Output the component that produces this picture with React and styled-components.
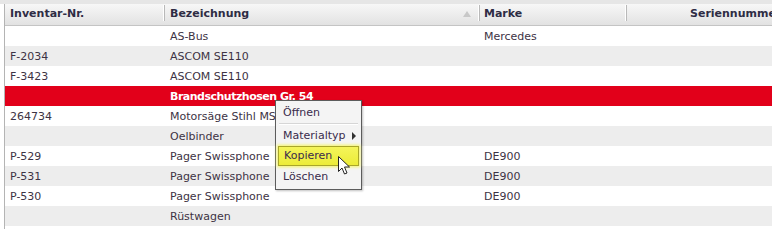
import React from 'react'
import styled, { createGlobalStyle } from 'styled-components'

const GlobalStyle = createGlobalStyle`
    html, body {
        margin: 0;
        padding: 0;
        background: #fff;
        overflow: hidden;
    }
    body {
        font-family: "DejaVu Sans", Verdana, sans-serif;
        font-size: 11px;
    }
`

const COLS = '160px 315px 147px 1fr'

const Frame = styled.div`
    position: relative;
    width: 772px;
    height: 229px;
    overflow: hidden;
    padding-top: 4px;
    background: #fff;
    box-sizing: border-box;
    &::before {
        content: '';
        position: absolute;
        left: 0;
        right: 0;
        top: 0;
        height: 4px;
        background: #e6e6e6;
    }
`

const Grid = styled.div`
    margin-left: 4px;
    border-left: 1px solid #b4b4b4;
    height: 100%;
`

const HeaderRow = styled.div`
    display: grid;
    grid-template-columns: ${COLS};
    height: 21px;
    background: linear-gradient(#f7f7f7, #e2e2e2);
    border-bottom: 1px solid #c4c4c4;
`

const HeadCell = styled.div`
    display: flex;
    align-items: center;
    justify-content: space-between;
    padding-left: ${p => p.$pad || 5}px;
    font-weight: bold;
    color: #2e2c44;
    white-space: nowrap;
    border-right: ${p => (p.$last ? 'none' : '1px solid #b9b9b9')};
    box-shadow: ${p => (p.$last ? 'none' : 'inset -1px 0 0 #fff')};
    margin: 1px 0 4px;
    overflow: hidden;
`

const SortArrow = styled.span`
    width: 0;
    height: 0;
    margin-right: 8px;
    margin-top: 2px;
    border-left: 4px solid transparent;
    border-right: 4px solid transparent;
    border-bottom: 6px solid #c8c8c8;
`

const Row = styled.div`
    display: grid;
    grid-template-columns: ${COLS};
    height: 20px;
    align-items: center;
    background: ${p => (p.$selected ? '#e2001a' : p.$odd ? '#ededed' : '#fff')};
    color: ${p => (p.$selected ? '#fff' : '#3d3344')};
    font-weight: ${p => (p.$selected ? 'bold' : 'normal')};
    letter-spacing: ${p => (p.$selected ? '-0.5px' : 'normal')};
`

const Cell = styled.div`
    padding-left: ${p => p.$pad || 5}px;
    white-space: nowrap;
    overflow: hidden;
`

const Menu = styled.div`
    position: absolute;
    left: 275px;
    top: 100px;
    width: 85px;
    padding: 2px 0;
    background: #f4f4f4;
    border: 1px solid #5c5c5c;
    box-shadow: 1px 1px 2px rgba(0, 0, 0, 0.25);
    color: #3a2c4c;
`

const MenuItem = styled.div`
    position: relative;
    height: ${p => (p.$active ? 18 : 20)}px;
    line-height: ${p => (p.$active ? 18 : 20)}px;
    margin: ${p => (p.$active ? '0 2px 1px' : '0')};
    padding-left: ${p => (p.$active ? 5 : 7)}px;
    background: ${p => (p.$active ? 'linear-gradient(#f4f45a, #ecec38)' : 'transparent')};
    border: ${p => (p.$active ? '1px solid #a9a62a' : 'none')};
    box-shadow: ${p => (p.$active ? '0 0 3px 1px #f5f560' : 'none')};
`

const SubArrow = styled.span`
    position: absolute;
    right: 5px;
    top: 6px;
    width: 0;
    height: 0;
    border-top: 4px solid transparent;
    border-bottom: 4px solid transparent;
    border-left: 4px solid #333;
`

const Separator = styled.div`
    height: 1px;
    margin: 0 3px 1px;
    background: #d6d6d6;
    border-bottom: 1px solid #fff;
`

const Pointer = styled.svg`
    position: absolute;
    left: 338px;
    top: 156px;
`

const rows = [
    ['', 'AS-Bus', 'Mercedes'],
    ['F-2034', 'ASCOM SE110', ''],
    ['F-3423', 'ASCOM SE110', ''],
    ['', 'Brandschutzhosen Gr. 54', '', true],
    ['264734', 'Motorsäge Stihl MS 260', ''],
    ['', 'Oelbinder', ''],
    ['P-529', 'Pager Swissphone', 'DE900'],
    ['P-531', 'Pager Swissphone', 'DE900'],
    ['P-530', 'Pager Swissphone', 'DE900'],
    ['', 'Rüstwagen', ''],
]

export default function App() {
    return (
        <>
            <GlobalStyle />
            <Frame>
                <Grid>
                    <HeaderRow>
                        <HeadCell>Inventar-Nr.</HeadCell>
                        <HeadCell>
                            Bezeichnung
                            <SortArrow />
                        </HeadCell>
                        <HeadCell $pad={4}>Marke</HeadCell>
                        <HeadCell $pad={63} $last>Seriennummer</HeadCell>
                    </HeaderRow>
                    {rows.map(([nr, name, brand, selected], i) => (
                        <Row key={i} $odd={i % 2 === 1} $selected={selected}>
                            <Cell>{nr}</Cell>
                            <Cell>{name}</Cell>
                            <Cell $pad={4}>{brand}</Cell>
                            <Cell />
                        </Row>
                    ))}
                </Grid>
                <Menu>
                    <MenuItem>Öffnen</MenuItem>
                    <Separator />
                    <MenuItem>
                        Materialtyp
                        <SubArrow />
                    </MenuItem>
                    <MenuItem $active>Kopieren</MenuItem>
                    <MenuItem>Löschen</MenuItem>
                </Menu>
                <Pointer width="13" height="20" viewBox="0 0 13 20">
                    <path
                        d="M0.5 0.5 L0.5 15.5 L4 12 L6.5 18 L9 17 L6.5 11 L11.5 11 Z"
                        fill="#fff"
                        stroke="#222"
                        strokeWidth="1"
                        strokeLinejoin="round"
                    />
                </Pointer>
            </Frame>
        </>
    )
}
